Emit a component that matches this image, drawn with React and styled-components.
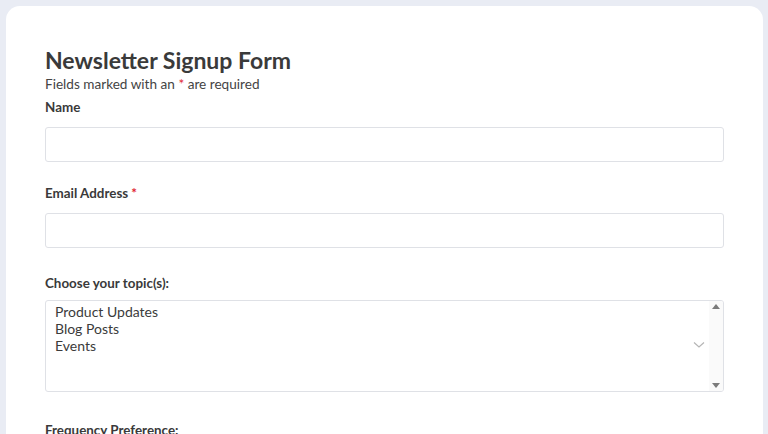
import React from "react";
import styled, { createGlobalStyle } from "styled-components";

const Global = createGlobalStyle`
  html, body { margin: 0; padding: 0; background: #e9ecf4; }
  body { font-family: Lato, "Noto Sans", sans-serif; color: #3b3b3b; overflow: hidden; }
  * { box-sizing: border-box; }
`;

const Page = styled.div`
  padding: 6px 5px 0 6px;
  height: 434px;
`;

const Card = styled.div`
  background: #ffffff;
  border-radius: 14px;
  padding: 40px 39px 40px 39px;
  min-height: 600px;
`;

const Title = styled.h1`
  margin: 0;
  font-size: 23px;
  line-height: 28px;
  font-weight: 700;
  color: #3a3a3a;
`;

const Note = styled.p`
  margin: 2px 0 0;
  font-size: 13.6px;
  line-height: 16px;
  color: #444;
`;

const Star = styled.span`
  color: #e0242f;
  margin-left: ${(p) => (p.$gap ? "3px" : "0")};
`;

const Field = styled.div`
  display: flex;
  flex-direction: column;
  margin-top: ${(p) => p.$top || 0}px;
`;

const Label = styled.label`
  font-size: 13.4px;
  line-height: 16px;
  font-weight: 700;
  color: #3a3a3a;
  margin-bottom: ${(p) => p.$gap || 16}px;
`;

const Input = styled.input`
  height: 35px;
  width: 100%;
  border: 1px solid #dfe1e6;
  border-radius: 3px;
  background: #fff;
  font: inherit;
  outline: none;
`;

const SelectWrap = styled.div`
  position: relative;
`;

const ListBox = styled.div`
  width: 100%;
  height: 92px;
  border: 1px solid #dfe1e6;
  border-radius: 3px;
  padding: 2px 9px;
  font-size: 14px;
  color: #3b3b3b;
  overflow: hidden;
`;

const Option = styled.div`
  line-height: 17px;
`;

const Chevron = styled.svg`
  position: absolute;
  right: 19px;
  top: 41px;
  pointer-events: none;
`;

const ScrollTrack = styled.div`
  position: absolute;
  top: 1px;
  right: 1px;
  bottom: 1px;
  width: 14px;
  background: #fafafa;
  border-radius: 0 2px 2px 0;
  display: flex;
  flex-direction: column;
  justify-content: space-between;
  align-items: center;
  padding: 3px 0 3px;
`;

const Arrow = styled.svg`
  display: block;
`;

export default function App() {
  return (
    <>
      <Global />
      <Page>
        <Card>
          <Title>Newsletter Signup Form</Title>
          <Note>
            Fields marked with an <Star>*</Star> are required
          </Note>
          <Field $top={7}>
            <Label $gap={12}>Name</Label>
            <Input type="text" />
          </Field>
          <Field $top={23}>
            <Label $gap={12}>
              Email Address<Star $gap>*</Star>
            </Label>
            <Input type="email" />
          </Field>
          <Field $top={27}>
            <Label $gap={9}>Choose your topic(s):</Label>
            <SelectWrap>
              <ListBox role="listbox" aria-multiselectable="true">
                <Option role="option">Product Updates</Option>
                <Option role="option">Blog Posts</Option>
                <Option role="option">Events</Option>
              </ListBox>
              <Chevron width="12" height="8" viewBox="0 0 12 8">
                <path d="M1 1.5 L6 6 L11 1.5" fill="none" stroke="#b5b5b5" strokeWidth="1.2" />
              </Chevron>
              <ScrollTrack>
                <Arrow width="8" height="5" viewBox="0 0 8 5">
                  <path d="M0 5 L4 0 L8 5 Z" fill="#7b7b7b" />
                </Arrow>
                <Arrow width="8" height="5" viewBox="0 0 8 5">
                  <path d="M0 0 L8 0 L4 5 Z" fill="#7b7b7b" />
                </Arrow>
              </ScrollTrack>
            </SelectWrap>
          </Field>
          <Field $top={30}>
            <Label>Frequency Preference:</Label>
          </Field>
        </Card>
      </Page>
    </>
  );
}
